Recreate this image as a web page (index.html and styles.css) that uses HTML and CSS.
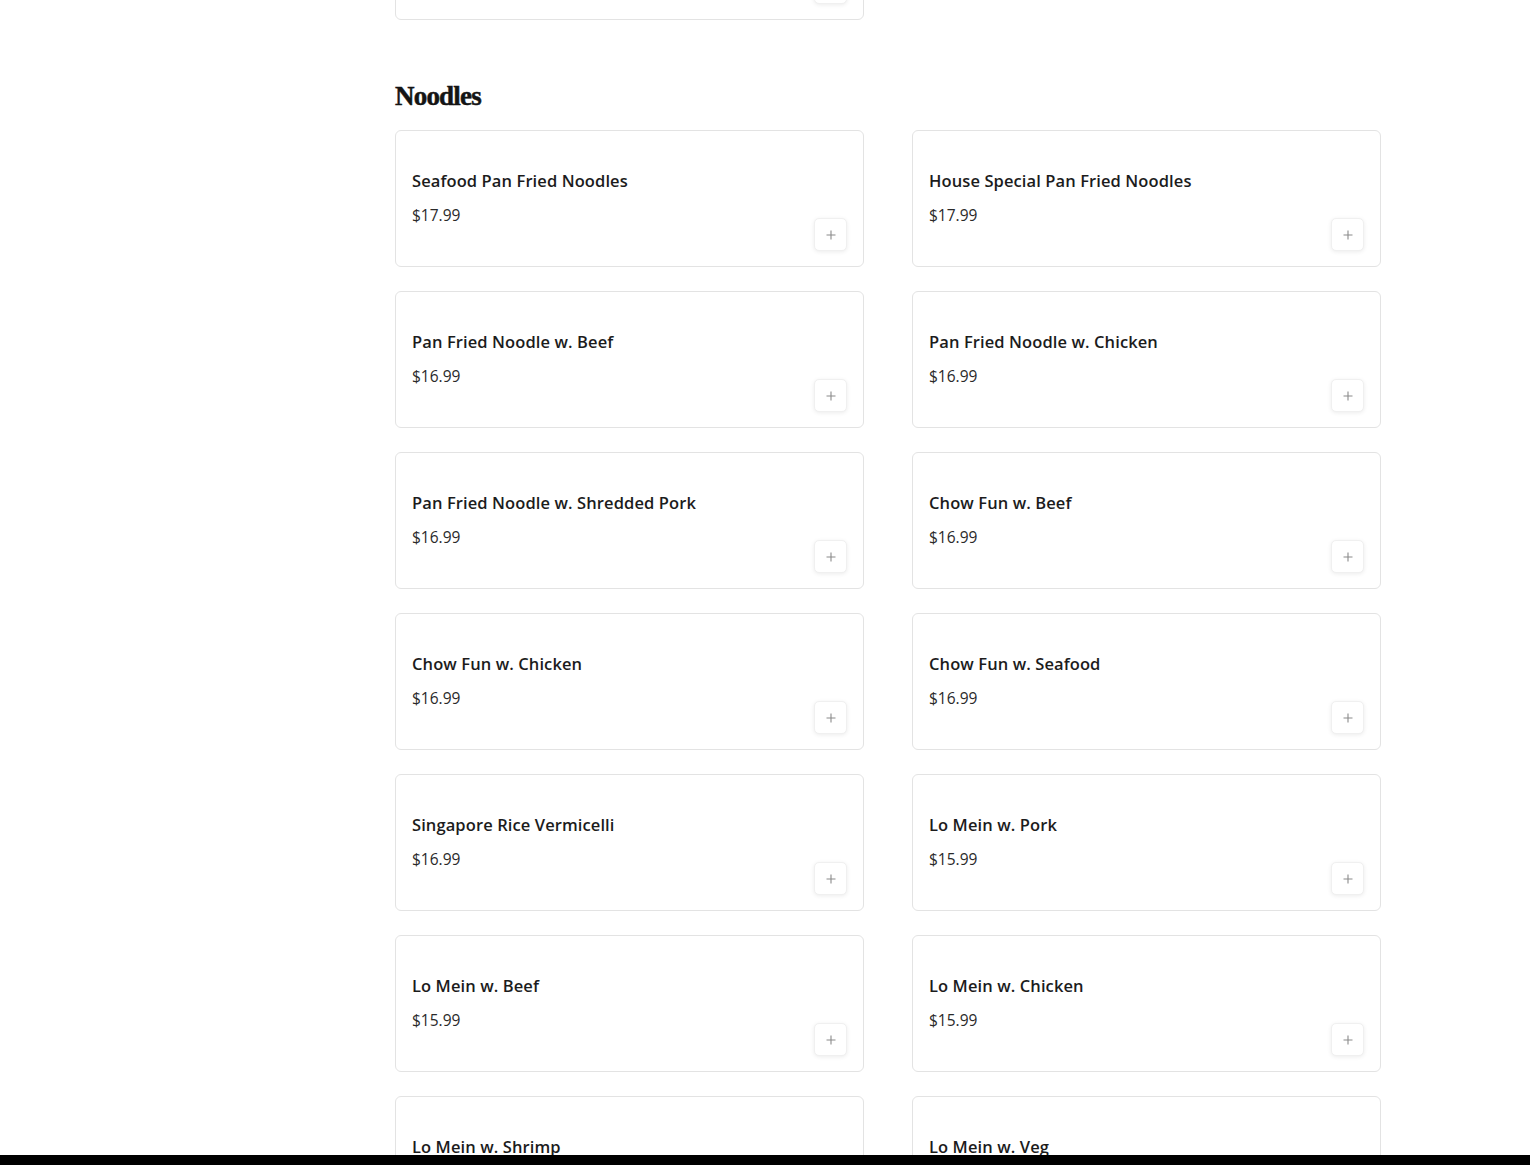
FILE: index.html
```html
<!DOCTYPE html>
<html lang="en">
<head>
<meta charset="utf-8">
<title>Menu - Noodles</title>
<link rel="stylesheet" href="styles.css">
</head>
<body>
<main class="menu">
  <section class="section section-prev">
    <div class="grid">
      <div class="card">
        <div class="info"><div class="name">&nbsp;</div><div class="price">&nbsp;</div></div>
        <button class="add" aria-label="Add"><svg viewBox="0 0 12 12" width="12" height="12"><path d="M6 1.5v9M1.5 6h9" stroke="#8a8a8a" stroke-width="1.1" fill="none"/></svg></button>
      </div>
    </div>
  </section>

  <section class="section">
    <h2 class="section-title">Noodles</h2>
    <div class="grid">
      <div class="card">
        <div class="info"><div class="name">Seafood Pan Fried Noodles</div><div class="price">$17.99</div></div>
        <button class="add" aria-label="Add"><svg viewBox="0 0 12 12" width="12" height="12"><path d="M6 1.5v9M1.5 6h9" stroke="#8a8a8a" stroke-width="1.1" fill="none"/></svg></button>
      </div>
      <div class="card">
        <div class="info"><div class="name">House Special Pan Fried Noodles</div><div class="price">$17.99</div></div>
        <button class="add" aria-label="Add"><svg viewBox="0 0 12 12" width="12" height="12"><path d="M6 1.5v9M1.5 6h9" stroke="#8a8a8a" stroke-width="1.1" fill="none"/></svg></button>
      </div>
      <div class="card">
        <div class="info"><div class="name">Pan Fried Noodle w. Beef</div><div class="price">$16.99</div></div>
        <button class="add" aria-label="Add"><svg viewBox="0 0 12 12" width="12" height="12"><path d="M6 1.5v9M1.5 6h9" stroke="#8a8a8a" stroke-width="1.1" fill="none"/></svg></button>
      </div>
      <div class="card">
        <div class="info"><div class="name">Pan Fried Noodle w. Chicken</div><div class="price">$16.99</div></div>
        <button class="add" aria-label="Add"><svg viewBox="0 0 12 12" width="12" height="12"><path d="M6 1.5v9M1.5 6h9" stroke="#8a8a8a" stroke-width="1.1" fill="none"/></svg></button>
      </div>
      <div class="card">
        <div class="info"><div class="name">Pan Fried Noodle w. Shredded Pork</div><div class="price">$16.99</div></div>
        <button class="add" aria-label="Add"><svg viewBox="0 0 12 12" width="12" height="12"><path d="M6 1.5v9M1.5 6h9" stroke="#8a8a8a" stroke-width="1.1" fill="none"/></svg></button>
      </div>
      <div class="card">
        <div class="info"><div class="name">Chow Fun w. Beef</div><div class="price">$16.99</div></div>
        <button class="add" aria-label="Add"><svg viewBox="0 0 12 12" width="12" height="12"><path d="M6 1.5v9M1.5 6h9" stroke="#8a8a8a" stroke-width="1.1" fill="none"/></svg></button>
      </div>
      <div class="card">
        <div class="info"><div class="name">Chow Fun w. Chicken</div><div class="price">$16.99</div></div>
        <button class="add" aria-label="Add"><svg viewBox="0 0 12 12" width="12" height="12"><path d="M6 1.5v9M1.5 6h9" stroke="#8a8a8a" stroke-width="1.1" fill="none"/></svg></button>
      </div>
      <div class="card">
        <div class="info"><div class="name">Chow Fun w. Seafood</div><div class="price">$16.99</div></div>
        <button class="add" aria-label="Add"><svg viewBox="0 0 12 12" width="12" height="12"><path d="M6 1.5v9M1.5 6h9" stroke="#8a8a8a" stroke-width="1.1" fill="none"/></svg></button>
      </div>
      <div class="card">
        <div class="info"><div class="name">Singapore Rice Vermicelli</div><div class="price">$16.99</div></div>
        <button class="add" aria-label="Add"><svg viewBox="0 0 12 12" width="12" height="12"><path d="M6 1.5v9M1.5 6h9" stroke="#8a8a8a" stroke-width="1.1" fill="none"/></svg></button>
      </div>
      <div class="card">
        <div class="info"><div class="name">Lo Mein w. Pork</div><div class="price">$15.99</div></div>
        <button class="add" aria-label="Add"><svg viewBox="0 0 12 12" width="12" height="12"><path d="M6 1.5v9M1.5 6h9" stroke="#8a8a8a" stroke-width="1.1" fill="none"/></svg></button>
      </div>
      <div class="card">
        <div class="info"><div class="name">Lo Mein w. Beef</div><div class="price">$15.99</div></div>
        <button class="add" aria-label="Add"><svg viewBox="0 0 12 12" width="12" height="12"><path d="M6 1.5v9M1.5 6h9" stroke="#8a8a8a" stroke-width="1.1" fill="none"/></svg></button>
      </div>
      <div class="card">
        <div class="info"><div class="name">Lo Mein w. Chicken</div><div class="price">$15.99</div></div>
        <button class="add" aria-label="Add"><svg viewBox="0 0 12 12" width="12" height="12"><path d="M6 1.5v9M1.5 6h9" stroke="#8a8a8a" stroke-width="1.1" fill="none"/></svg></button>
      </div>
      <div class="card">
        <div class="info"><div class="name">Lo Mein w. Shrimp</div><div class="price">$15.99</div></div>
        <button class="add" aria-label="Add"><svg viewBox="0 0 12 12" width="12" height="12"><path d="M6 1.5v9M1.5 6h9" stroke="#8a8a8a" stroke-width="1.1" fill="none"/></svg></button>
      </div>
      <div class="card">
        <div class="info"><div class="name">Lo Mein w. Veg</div><div class="price">$15.99</div></div>
        <button class="add" aria-label="Add"><svg viewBox="0 0 12 12" width="12" height="12"><path d="M6 1.5v9M1.5 6h9" stroke="#8a8a8a" stroke-width="1.1" fill="none"/></svg></button>
      </div>
    </div>
  </section>
</main>
<div class="bottom-bar"></div>
</body>
</html>
```

FILE: styles.css
```css
html, body {
  margin: 0;
  padding: 0;
  background: #ffffff;
}

body {
  font-family: "Open Sans", "Noto Sans", "Liberation Sans", sans-serif;
  color: #1a1a1a;
  overflow: hidden;
}

.menu {
  width: 986px;
  margin-left: 395px;
}

.section-prev {
  margin-top: -117px;
}

.section + .section {
  margin-top: 60px;
}

.section-title {
  font-family: "Liberation Serif", "DejaVu Serif", serif;
  font-weight: 700;
  font-size: 27px;
  line-height: 32px;
  letter-spacing: -0.8px;
  -webkit-text-stroke: 0.5px #141414;
  color: #141414;
  margin: 0 0 18px 0;
}

.grid {
  display: grid;
  grid-template-columns: 469px 469px;
  column-gap: 48px;
  row-gap: 24px;
}

.card {
  box-sizing: border-box;
  height: 137px;
  border: 1px solid #e3e3e3;
  border-radius: 6px;
  padding: 16px 16px 15px 16px;
  display: flex;
  align-items: center;
  justify-content: space-between;
  background: #fff;
}

.info {
  display: flex;
  flex-direction: column;
  gap: 10px;
  margin-top: -2px;
}

.name {
  font-size: 16.5px;
  line-height: 24px;
  font-weight: 600;
  color: #1c1c1c;
  letter-spacing: 0.1px;
}

.price {
  font-size: 15.5px;
  line-height: 24px;
  font-weight: 400;
  color: #2a2a2a;
}

.add {
  align-self: flex-end;
  width: 33px;
  height: 33px;
  padding: 0;
  border: 1px solid #f0f0f0;
  border-radius: 5px;
  background: #fff;
  box-shadow: 0 1px 4px rgba(0, 0, 0, 0.08);
  display: flex;
  align-items: center;
  justify-content: center;
  cursor: pointer;
}

.bottom-bar {
  position: fixed;
  left: 0;
  right: 0;
  bottom: 0;
  height: 10px;
  background: #000;
}
```
